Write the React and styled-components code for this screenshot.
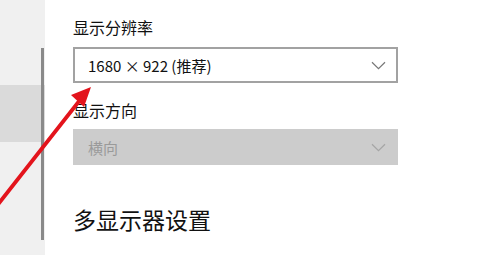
import React from "react";
import styled, { createGlobalStyle } from "styled-components";

const Global = createGlobalStyle`
  html, body { margin: 0; padding: 0; background: #fff; }
  body { font-family: "Noto Sans CJK SC", "Noto Sans", sans-serif; }
  #root { width: 480px; height: 255px; overflow: hidden; }
`;

const Page = styled.div`
  position: relative;
  display: flex;
  width: 480px;
  height: 255px;
  background: #fff;
`;

const Sidebar = styled.nav`
  position: relative;
  width: 45px;
  display: flex;
  flex-direction: column;
  background: #f0f0f0;
`;

const NavItem = styled.div`
  height: ${(p) => p.$h}px;
  background: ${(p) => (p.$selected ? "#dadada" : "transparent")};
`;

const ScrollThumb = styled.div`
  position: absolute;
  left: 41px;
  top: 48px;
  width: 3px;
  height: 192px;
  background: #8a8a8a;
`;

const Content = styled.main`
  flex: 1;
  padding-left: 28px;
  display: flex;
  flex-direction: column;
  align-items: flex-start;
`;

const Label = styled.div`
  font-size: 16px;
  line-height: 22px;
  color: #111;
  margin-top: ${(p) => p.$mt}px;
`;

const Select = styled.div`
  box-sizing: border-box;
  width: 325px;
  height: 36px;
  margin-top: ${(p) => p.$mt}px;
  display: flex;
  align-items: center;
  justify-content: space-between;
  padding: 0 10px 0 13px;
  border: 2px solid ${(p) => (p.$disabled ? "#cccccc" : "#a2a2a2")};
  background: ${(p) => (p.$disabled ? "#cccccc" : "#ffffff")};
  color: ${(p) => (p.$disabled ? "#9a9a9a" : "#111")};
  font-size: 15px;
`;

const Heading = styled.h2`
  margin: 39px 0 0;
  font-weight: 400;
  font-size: 23px;
  line-height: 30px;
  color: #111;
`;

const Overlay = styled.svg`
  position: absolute;
  left: 0;
  top: 0;
  pointer-events: none;
`;

const Chevron = ({ color }) => (
  <svg width="15" height="9" viewBox="0 0 15 9">
    <path d="M1 1.2 L7.5 7.6 L14 1.2" fill="none" stroke={color} strokeWidth="1.2" />
  </svg>
);

export default function App() {
  return (
    <>
      <Global />
      <Page>
        <Sidebar>
          <NavItem $h={85} />
          <NavItem $h={57} $selected />
          <NavItem $h={113} />
          <ScrollThumb />
        </Sidebar>
        <Content>
          <Label $mt={16}>显示分辨率</Label>
          <Select $mt={9}>
            <span>1680 × 922 (推荐)</span>
            <Chevron color="#777" />
          </Select>
          <Label $mt={16}>显示方向</Label>
          <Select $mt={8} $disabled>
            <span>横向</span>
            <Chevron color="#a5a5a5" />
          </Select>
          <Heading>多显示器设置</Heading>
        </Content>
        <Overlay width="480" height="255" viewBox="0 0 480 255">
          <line x1="-4" y1="207" x2="80" y2="100" stroke="#e3141c" strokeWidth="3.8" strokeLinecap="round" />
          <polygon points="91,87 71,95 84,107" fill="#e3141c" />
        </Overlay>
      </Page>
    </>
  );
}
